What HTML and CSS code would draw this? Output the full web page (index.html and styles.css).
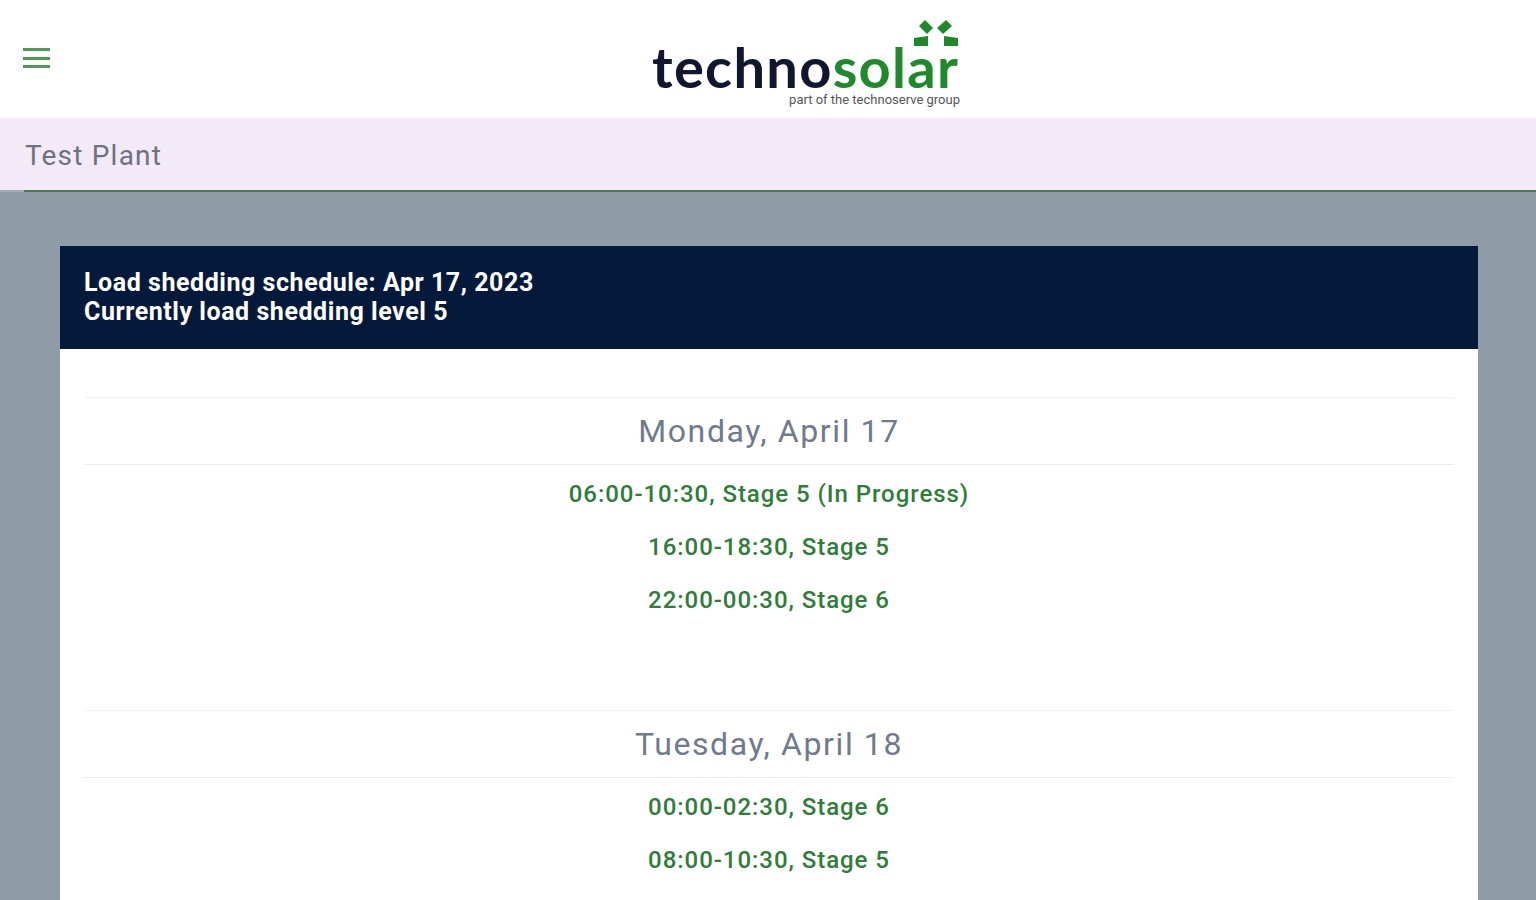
FILE: index.html
```html
<!DOCTYPE html>
<html>
    <head>
        <link rel="stylesheet" href="styles.css">
        <title>Load shedding</title>
    </head>

    <body>
        <header class="top-bar">
            <button class="menu-button" aria-label="Menu">
                <span></span>
                <span></span>
                <span></span>
            </button>
            <div class="logo">
                <svg class="logo-mark" viewBox="0 0 45 27" width="45" height="27">
                    <path d="M5 6 L11 0 L19 8 L13 14 Z" fill="#1f8a2c"/>
                    <path d="M23 8 L32 0 L38 6 L29 14 Z" fill="#1f8a2c"/>
                    <path d="M0 18 L14 16 L14 26 L0 26 Z" fill="#1f8a2c"/>
                    <path d="M30 16 L44 18 L44 26 L30 26 Z" fill="#1f8a2c"/>
                </svg>
                <div class="logo-name"><span class="logo-dark">techno</span><span class="logo-green">solar</span></div>
                <div class="logo-sub">part of the technoserve group</div>
            </div>
        </header>

        <nav class="plant-bar">
            <div class="plant-tab">Test Plant</div>
        </nav>

        <main class="page">
            <section class="card">
                <div class="card-head">
                    <div>Load shedding schedule: Apr 17, 2023</div>
                    <div>Currently load shedding level 5</div>
                </div>
                <div class="card-body">
                    <div class="day">
                        <h2 class="day-title">Monday, April 17</h2>
                        <p class="slot">06:00-10:30, Stage 5 (In Progress)</p>
                        <p class="slot">16:00-18:30, Stage 5</p>
                        <p class="slot">22:00-00:30, Stage 6</p>
                    </div>
                    <div class="day">
                        <h2 class="day-title">Tuesday, April 18</h2>
                        <p class="slot">00:00-02:30, Stage 6</p>
                        <p class="slot">08:00-10:30, Stage 5</p>
                    </div>
                </div>
            </section>
        </main>
    </body>
</html>
```

FILE: styles.css
```css
html, body {
    margin: 0;
    height: 900px;
    overflow: hidden;
}

body {
    background-color: #8f9ba7;
    font-family: Roboto, "Liberation Sans", sans-serif;
}

.top-bar {
    height: 118px;
    background: white;
    display: flex;
    align-items: flex-start;
    justify-content: center;
    position: relative;
}

.menu-button {
    position: absolute;
    left: 23px;
    top: 48px;
    width: 27px;
    height: 20px;
    padding: 0;
    border: none;
    background: none;
    display: flex;
    flex-direction: column;
    justify-content: space-between;
}

.menu-button span {
    display: block;
    height: 3px;
    background-color: #4f9a57;
}

.logo {
    width: 308px;
    margin-top: 20px;
    margin-left: 76px;
    display: flex;
    flex-direction: column;
    align-items: flex-end;
}

.logo-mark {
    display: block;
    margin-right: 1px;
}

.logo-name {
    align-self: flex-start;
    margin-top: -5px;
    font-family: Lato, sans-serif;
    font-size: 56px;
    font-weight: 700;
    letter-spacing: 1.3px;
    line-height: 50px;
    white-space: nowrap;
}

.logo-dark {
    color: #10172f;
}

.logo-green {
    color: #1f8a2c;
}

.logo-sub {
    margin-top: 1px;
    font-size: 13px;
    line-height: 14px;
    color: #555;
    white-space: nowrap;
}

.plant-bar {
    height: 72px;
    background-color: #f3eaf7;
    border-bottom: 2px solid #a4adb6;
}

.plant-tab {
    margin-left: 24px;
    padding-left: 1px;
    height: 72px;
    line-height: 75px;
    font-size: 28px;
    letter-spacing: 1.2px;
    color: #6d7280;
    border-bottom: 2px solid #4c7a58;
}

.page {
    padding: 54px 58px 0 60px;
}

.card {
    background: white;
}

.card-head {
    background-color: #051a3b;
    color: white;
    font-size: 25px;
    font-weight: 700;
    line-height: 29px;
    padding: 22px 24px 23px;
    height: 58px;
    letter-spacing: 0.55px;
}

.card-body {
    padding: 48px 24px 0;
}

.day {
    height: 312.5px;
}

.day-title {
    margin: 0;
    height: 66px;
    line-height: 67px;
    border-top: 1px solid #f1f1f1;
    border-bottom: 1px solid #ececec;
    text-align: center;
    font-size: 32px;
    font-weight: 400;
    letter-spacing: 1.6px;
    color: #6f7a8d;
}

.slot {
    margin: 0;
    height: 53px;
    line-height: 59px;
    text-align: center;
    font-size: 24px;
    font-weight: 500;
    letter-spacing: 0.95px;
    color: #2e7d38;
}
```
